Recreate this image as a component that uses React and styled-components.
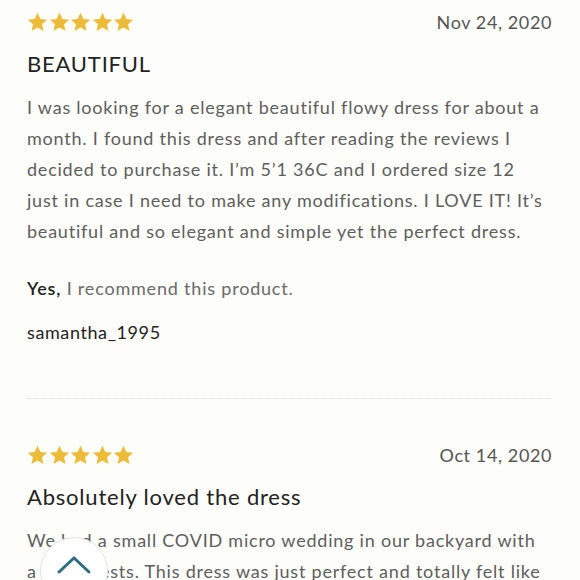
import styled, { createGlobalStyle } from "styled-components";

const GlobalStyle = createGlobalStyle`
  html, body {
    margin: 0;
    padding: 0;
    background: #fdfdf9;
    font-family: Lato, "Noto Sans", sans-serif;
  }
`;

const reviews = [
  {
    id: 1,
    date: "Nov 24, 2020",
    title: "BEAUTIFUL",
    body:
      "I was looking for a elegant beautiful flowy dress for about a month. I found this dress and after reading the reviews I decided to purchase it. I\u2019m 5\u20191 36C and I ordered size 12 just in case I need to make any modifications. I LOVE IT! It\u2019s beautiful and so elegant and simple yet the perfect dress.",
    recommend: true,
    user: "samantha_1995",
  },
  {
    id: 2,
    date: "Oct 14, 2020",
    title: "Absolutely loved the dress",
    body:
      "We had a small COVID micro wedding in our backyard with a few guests. This dress was just perfect and totally felt like a dream.",
  },
];

const Star = () => (
  <svg width="21" height="20" viewBox="0 0 24 23">
    <path
      d="M12 0.8l3.3 7.2 7.8 0.8-5.9 5.3 1.7 7.7L12 17.8l-6.9 4 1.7-7.7L0.9 8.8l7.8-0.8z"
      fill="#ecbb38"
    />
  </svg>
);

const Review = ({ review }) => (
  <ReviewItem>
    <TopRow>
      <Stars>
        {[0, 1, 2, 3, 4].map((i) => (
          <Star key={i} />
        ))}
      </Stars>
      <DateText>{review.date}</DateText>
    </TopRow>
    <Title>{review.title}</Title>
    <Body>{review.body}</Body>
    {review.recommend && (
      <Recommend>
        <strong>Yes,</strong> I recommend this product.
      </Recommend>
    )}
    {review.user && <Username>{review.user}</Username>}
  </ReviewItem>
);

const App = () => {
  return (
    <Page>
      <GlobalStyle />
      {reviews.map((review, index) => (
        <div key={review.id}>
          {index > 0 && <Divider />}
          <Review review={review} />
        </div>
      ))}
      <ScrollTop aria-label="Back to top">
        <svg width="36" height="20" viewBox="0 0 36 20">
          <path
            d="M3 17L18 3l15 14"
            fill="none"
            stroke="#2b6f80"
            strokeWidth="3"
            strokeLinecap="round"
          />
        </svg>
      </ScrollTop>
    </Page>
  );
};

export default App;

const Page = styled.div`
  padding: 8px 28px 0 27px;
  height: 580px;
  overflow: hidden;
  position: relative;
  box-sizing: border-box;
`;

const ReviewItem = styled.div`
  display: flex;
  flex-direction: column;
`;

const TopRow = styled.div`
  display: flex;
  align-items: center;
  justify-content: space-between;
  height: 28px;
`;

const Stars = styled.div`
  display: flex;
  gap: 0.5px;
`;

const DateText = styled.div`
  font-size: 18px;
  color: #555;
  letter-spacing: 0.6px;
`;

const Title = styled.h2`
  margin: 13px 0 0 0;
  font-size: 22px;
  font-weight: 400;
  color: #222;
  letter-spacing: 0.8px;
  line-height: 30px;
`;

const Body = styled.p`
  margin: 13px 4px 0 0;
  font-size: 18px;
  line-height: 31px;
  color: #5e5e5e;
  letter-spacing: 0.78px;
`;

const Recommend = styled.p`
  margin: 28px 0 0 0;
  font-size: 18px;
  line-height: 26px;
  color: #6a6a6a;
  letter-spacing: 0.8px;

  strong {
    color: #222;
    font-weight: 600;
  }
`;

const Username = styled.div`
  margin-top: 18px;
  font-size: 18px;
  line-height: 26px;
  color: #222;
  letter-spacing: 0.6px;
`;

const Divider = styled.div`
  border-top: 1px dotted #d8d8d4;
  margin: 53px 0 42px 0;
`;

const ScrollTop = styled.button`
  position: absolute;
  left: 40px;
  top: 537px;
  width: 68px;
  height: 68px;
  border-radius: 50%;
  border: 1px solid #e2e2de;
  background: #fff;
  display: flex;
  justify-content: center;
  padding: 17px 0 0 0;
  box-sizing: border-box;
`;
